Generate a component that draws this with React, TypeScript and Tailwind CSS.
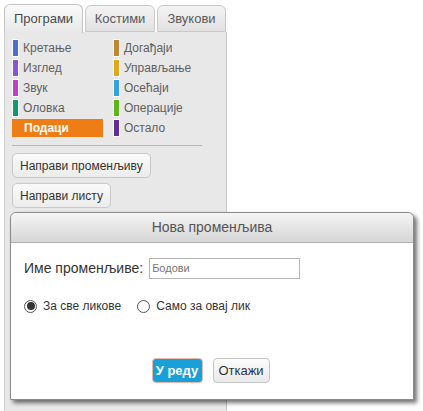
import React from 'react';

const font = { fontFamily: '"Liberation Sans", Arial, sans-serif' };

const left = [
  { name: 'Кретање', color: 'bg-[#4a6cd4]' },
  { name: 'Изглед', color: 'bg-[#8a55d7]' },
  { name: 'Звук', color: 'bg-[#bb42c3]' },
  { name: 'Оловка', color: 'bg-[#0e9a6c]' },
  { name: 'Подаци', color: 'bg-[#ee7d16]', active: true },
];

const right = [
  { name: 'Догађаји', color: 'bg-[#c88330]' },
  { name: 'Управљање', color: 'bg-[#e1a91a]' },
  { name: 'Осећаји', color: 'bg-[#2ca5e2]' },
  { name: 'Операције', color: 'bg-[#5cb712]' },
  { name: 'Остало', color: 'bg-[#632d99]' },
];

type Cat = { name: string; color: string; active?: boolean };

const Category = ({ cat }: { cat: Cat }) => {
  if (cat.active) {
    return (
      <div className="h-[18px] w-[91px] bg-[#ee7d16] flex items-center pl-[12px] text-[12px] font-bold text-white">
        {cat.name}
      </div>
    );
  }
  return (
    <div className="h-[18px] flex items-center">
      <div className={`w-[7px] h-[18px] border border-white ${cat.color}`} />
      <span className="ml-[4px] text-[12px] text-[#606060]">{cat.name}</span>
    </div>
  );
};

export default function App() {
  return (
    <div className="relative w-[423px] h-[411px] bg-white overflow-hidden" style={font}>
      <div className="pt-[4px] pl-[4px] w-[227px] h-full flex flex-col">
        {/* tabs */}
        <div className="flex h-[28px] items-end relative z-10">
          <div className="w-[79px] h-[29px] rounded-t-[6px] border border-[#c4c4c4] border-b-0 bg-gradient-to-b from-[#fafafa] to-[#e8e8e8] flex items-center justify-center text-[13px] text-[#4a4a4a] -mb-px">
            Програми
          </div>
          <div className="ml-[2px] w-[70px] h-[27px] rounded-t-[6px] border border-[#c8c8c8] bg-gradient-to-b from-[#f4f4f4] to-[#e1e1e1] flex items-center justify-center text-[13px] text-[#5a5a5a]">
            Костими
          </div>
          <div className="ml-[2px] w-[69px] h-[27px] rounded-t-[6px] border border-[#c8c8c8] bg-gradient-to-b from-[#f4f4f4] to-[#e1e1e1] flex items-center justify-center text-[13px] text-[#5a5a5a]">
            Звукови
          </div>
        </div>
        {/* palette body */}
        <div className="flex-1 bg-[#e8e8e8] border-l border-r border-[#d0d0d0] border-r-[#c8c8c8] pl-[7px] pt-[7px]">
          <div className="flex gap-[10px]">
            <div className="flex flex-col gap-[2px] w-[91px]">
              {left.map((c) => (
                <Category key={c.name} cat={c} />
              ))}
            </div>
            <div className="flex flex-col gap-[2px]">
              {right.map((c) => (
                <Category key={c.name} cat={c} />
              ))}
            </div>
          </div>
          <div className="mt-[8px] w-[190px] h-px bg-[#b8b8b8]" />
          <div className="mt-[7px] flex flex-col items-start gap-[5px]">
            <button className="h-[25px] px-[7px] rounded-[5px] border border-[#c9c9c9] bg-gradient-to-b from-[#fafafa] to-[#ececec] text-[12px] text-[#333]">
              Направи променљиву
            </button>
            <button className="h-[25px] px-[7px] rounded-[5px] border border-[#c9c9c9] bg-gradient-to-b from-[#fafafa] to-[#ececec] text-[12px] text-[#333]">
              Направи листу
            </button>
          </div>
        </div>
      </div>

      {/* dialog */}
      <div className="absolute left-[10px] top-[212px] w-[404px] h-[188px] bg-white border border-[#8a8a8a] rounded-t-[6px] shadow-[3px_3px_4px_rgba(0,0,0,0.55)] flex flex-col">
        <div className="h-[30px] rounded-t-[6px] bg-gradient-to-b from-[#f5f5f5] to-[#d6d6d6] border-b border-[#b0b0b0] flex items-center justify-center text-[14px] text-[#555]">
          Нова променљива
        </div>
        <div className="flex items-center mt-[15px] ml-[13px]">
          <span className="text-[14px] text-[#333]">Име променљиве:</span>
          <div className="ml-[6px] w-[151px] h-[21px] border border-[#b5b5b5] flex items-center pl-[2px] text-[11px] text-[#777]">
            Бодови
          </div>
        </div>
        <div className="flex items-center mt-[18px] ml-[13px] text-[12px] text-[#333]">
          <span className="w-[13px] h-[13px] rounded-full border border-[#555] flex items-center justify-center">
            <span className="w-[8px] h-[8px] rounded-full bg-[#333]" />
          </span>
          <span className="ml-[6px]">За све ликове</span>
          <span className="ml-[16px] w-[13px] h-[13px] rounded-full border border-[#555] bg-white" />
          <span className="ml-[6px]">Само за овај лик</span>
        </div>
        <div className="flex justify-center gap-[10px] mt-[43px] pl-[77px] pr-[80px]">
          <button className="w-[51px] h-[25px] rounded-[4px] bg-[#1aa0d8] border border-[#e8b8a8] text-[13px] font-bold text-white">
            У реду
          </button>
          <button className="w-[57px] h-[25px] rounded-[4px] border border-[#c4c4c4] bg-gradient-to-b from-[#fcfcfc] to-[#e9e9e9] text-[13px] text-[#333]">
            Откажи
          </button>
        </div>
      </div>
    </div>
  );
}
